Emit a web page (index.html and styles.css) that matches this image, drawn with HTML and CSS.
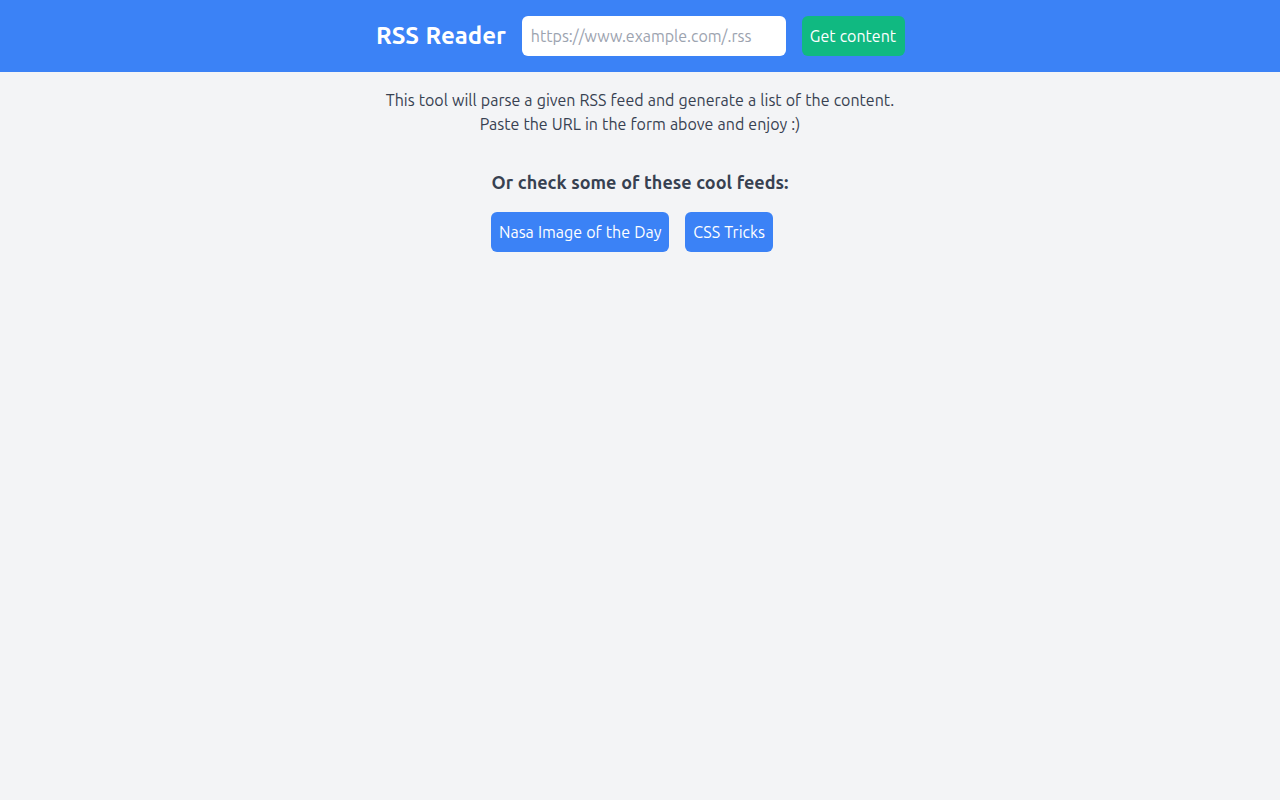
FILE: index.html
```html
<!DOCTYPE html>
<html lang="en">
<head>
<meta charset="utf-8">
<title>RSS Reader</title>
<link rel="stylesheet" href="styles.css">
</head>
<body>
<header class="topbar">
  <div class="topbar-inner">
    <h1 class="brand">RSS Reader</h1>
    <form class="feed-form">
      <input class="feed-input" type="text" placeholder="https://www.example.com/.rss">
      <button class="btn btn-green" type="button">Get content</button>
    </form>
  </div>
</header>
<main class="content">
  <p class="intro">This tool will parse a given RSS feed and generate a list of the content.<br>Paste the URL in the form above and enjoy :)</p>
  <h2 class="subtitle">Or check some of these cool feeds:</h2>
  <div class="feeds">
    <button class="btn btn-blue feed-btn" type="button">Nasa Image of the Day</button>
    <button class="btn btn-blue feed-btn" type="button">CSS Tricks</button>
  </div>
</main>
</body>
</html>
```

FILE: styles.css
```css
* { box-sizing: border-box; }
html, body { margin: 0; padding: 0; }
body {
  background: #f3f4f6;
  color: #374151;
  font-family: "Ubuntu", "Noto Sans", "Open Sans", sans-serif;
  font-size: 16px;
  line-height: 24px;
  word-spacing: 0.45px;
  min-height: 800px;
}
.topbar {
  background: #3b82f6;
  height: 72px;
  display: flex;
  align-items: center;
  justify-content: center;
}
.topbar-inner {
  display: flex;
  align-items: center;
  gap: 16px;
  padding-left: 1px;
}
.brand {
  margin: 0;
  color: #ffffff;
  font-size: 24px;
  line-height: 32px;
  font-weight: 700;
  word-spacing: 1px;
}
.feed-form {
  display: flex;
  align-items: center;
  gap: 16px;
  margin: 0;
}
.feed-input {
  width: 264px;
  height: 40px;
  padding: 8px 9px;
  border: none;
  border-radius: 6px;
  font-family: inherit;
  font-size: 16px;
  line-height: 24px;
  color: #374151;
  background: #ffffff;
  outline: none;
}
.feed-input::placeholder { color: #9ca3af; }
.btn {
  border: none;
  border-radius: 6px;
  padding: 8px;
  height: 40px;
  font-family: inherit;
  font-size: 16px;
  line-height: 24px;
  word-spacing: inherit;
  color: #ffffff;
  cursor: pointer;
}
.btn-green { background: #10b981; padding: 8px 9px 8px 8px; }
.btn-blue { background: #3b82f6; }
.feed-btn { margin-right: 16px; }
.content {
  display: flex;
  flex-direction: column;
  align-items: center;
  padding-top: 16px;
  text-align: center;
}
.intro { margin: 0; }
.subtitle {
  margin: 32px 0 0;
  font-size: 18px;
  line-height: 28px;
  font-weight: 700;
}
.feeds {
  display: flex;
  margin-top: 16px;
}
```
